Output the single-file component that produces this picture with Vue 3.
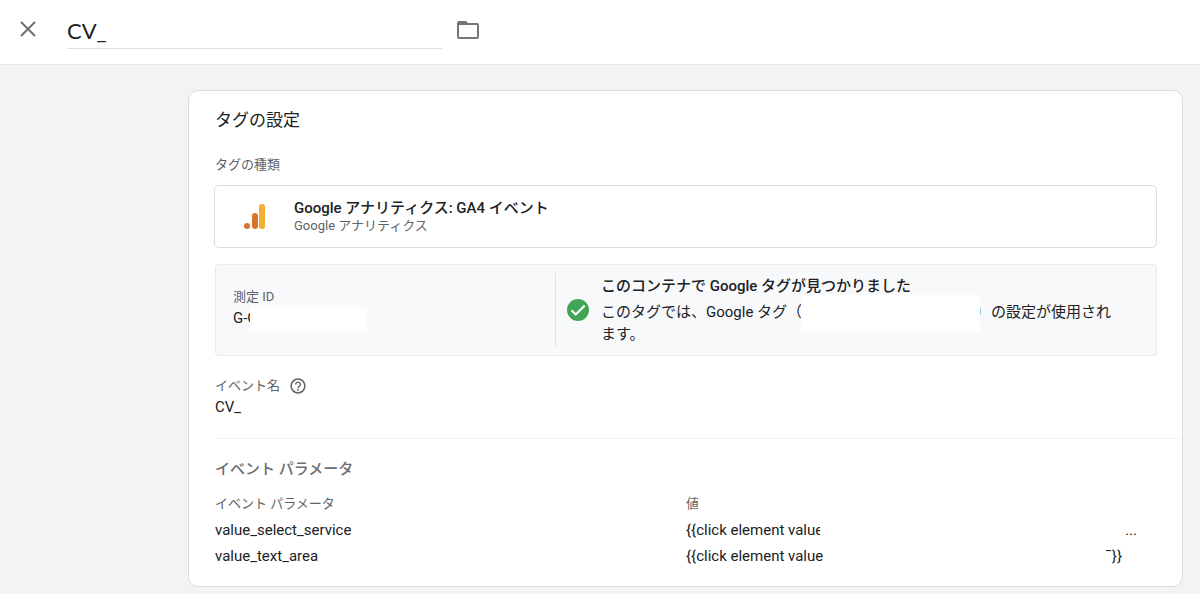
<script setup>
import { ref } from "vue"

const tagName = ref("CV_")
const eventName = ref("CV_")

const params = ref([
  { name: "value_select_service", value: "{{click element value", mark: "", end: "...", clipped: true },
  { name: "value_text_area", value: "{{click element value", mark: "ˉ", end: "}}", clipped: false }
])
</script>

<template>
  <div class="page">
    <header>
      <button class="icon-button close" aria-label="閉じる">
        <svg width="16" height="16" viewBox="0 0 16 16">
          <path d="M1 1l14 14M15 1L1 15" fill="none" stroke="#6b6e72" stroke-width="1.9" />
        </svg>
      </button>
      <input v-model="tagName" class="tag-name" type="text" aria-label="タグ名">
      <button class="icon-button folder" aria-label="フォルダ">
        <svg width="22" height="18" viewBox="0 0 22 18">
          <path d="M2 0h7l2 2h9a2 2 0 0 1 2 2v12a2 2 0 0 1-2 2H2a2 2 0 0 1-2-2V2a2 2 0 0 1 2-2zm0 4v12h18V4z" fill="#757575" fill-rule="evenodd" />
        </svg>
      </button>
    </header>

    <main class="card">
      <h1>タグの設定</h1>
      <p class="label">タグの種類</p>

      <div class="tag-type">
        <svg class="logo" width="22" height="26" viewBox="0 0 22 26">
          <rect x="15" y="0" width="6" height="25" rx="3" fill="#f2ae35" />
          <rect x="8" y="9" width="6" height="16" rx="3" fill="#d97529" />
          <circle cx="3" cy="22" r="3" fill="#d97529" />
        </svg>
        <div class="type-text">
          <p class="type-name">Google アナリティクス: GA4 イベント</p>
          <p class="label type-vendor">Google アナリティクス</p>
        </div>
      </div>

      <section class="measurement">
        <div class="measurement-id">
          <p class="label">測定 ID</p>
          <p class="id-value">G-C<span class="cover id-cover"></span></p>
        </div>
        <div class="found">
          <svg class="check" width="22" height="22" viewBox="0 0 22 22">
            <circle cx="11" cy="11" r="11" fill="#41a556" />
            <path d="M4.5 11.3l4.2 4.2 9-9" fill="none" stroke="#fff" stroke-width="2.2" />
          </svg>
          <div>
            <p class="found-title">このコンテナで Google タグが見つかりました</p>
            <p class="found-text">このタグでは、Google タグ（<span class="cover tag-cover"></span><span class="link-end">）</span>の設定が使用されます。</p>
          </div>
        </div>
      </section>

      <div class="event">
        <div class="event-label">
          <p class="label">イベント名</p>
          <button class="icon-button" aria-label="ヘルプ">
            <svg width="16" height="16" viewBox="0 0 16 16">
              <circle cx="8" cy="8" r="6.9" fill="none" stroke="#5f6368" stroke-width="1.5" />
              <path d="M5.7 6.5a2.3 2.3 0 1 1 3.8 1.7C8.6 8.9 8 9.2 8 10.2" fill="none" stroke="#5f6368" stroke-width="1.4" />
              <rect x="7.2" y="11" width="1.6" height="1.6" fill="#5f6368" />
            </svg>
          </button>
        </div>
        <p>{{ eventName }}</p>
      </div>

      <section class="params">
        <h2>イベント パラメータ</h2>
        <table>
          <thead>
            <tr>
              <th>イベント パラメータ</th>
              <th>値</th>
            </tr>
          </thead>
          <tbody>
            <tr v-for="param in params" :key="param.name">
              <td>{{ param.name }}</td>
              <td>
                <div class="value" :class="{ clipped: param.clipped }">
                  <span>{{ param.value }}</span>
                  <span class="cover value-cover"></span>
                  <span v-if="param.mark" class="mark">{{ param.mark }}</span>
                  <span>{{ param.end }}</span>
                </div>
              </td>
            </tr>
          </tbody>
        </table>
      </section>
    </main>
  </div>
</template>

<style>
body {
  background-color: #f1f3f4;
}
</style>

<style scoped>
.page {
  font-family: Roboto, "Noto Sans CJK JP", sans-serif;
  font-size: 15px;
  line-height: 22px;
  color: #202124;
}

p,
h1,
h2 {
  margin: 0;
}

header {
  display: flex;
  align-items: center;
  height: 64px;
  padding: 0 20px;
  background-color: white;
  border-bottom: 1px solid #e2e4e6;
}

.icon-button {
  display: flex;
  padding: 0;
  border: none;
  background: none;
  cursor: pointer;
}

.close {
  margin: 0 31px 6px 0;
}

.folder {
  margin: 0 0 4px 15px;
}

.tag-name {
  width: 375px;
  height: 36px;
  margin-bottom: 2px;
  padding: 0;
  box-sizing: border-box;
  border: none;
  border-bottom: 1px solid #e0e0e0;
  outline: none;
  background: none;
  font-family: Lato, sans-serif;
  font-size: 22px;
  color: #202124;
}

.card {
  margin: 25px 17px 7px 188px;
  padding: 16px 0 17px 25px;
  background-color: white;
  border: 1px solid #dadce0;
  border-radius: 10px;
}

h1,
h1 + .label {
  margin-left: 1px;
}

h1 {
  font-size: 17px;
  font-weight: 400;
  line-height: 26px;
}

.label {
  font-size: 13px;
  line-height: 20px;
  color: #5f6368;
}

h1 + .label {
  margin-top: 22px;
}

.tag-type {
  display: flex;
  align-items: center;
  gap: 28px;
  height: 61px;
  margin: 10px 25px 0 0;
  padding-left: 29px;
  border: 1px solid #dadce0;
  border-radius: 5px;
}

.type-text {
  padding-bottom: 2px;
}

.type-name {
  font-weight: 500;
  line-height: 20px;
}

.type-vendor {
  line-height: 16px;
}

.measurement {
  display: flex;
  margin: 16px 25px 0 1px;
  padding: 8px 0;
  background-color: #f8f9fa;
  border: 1px solid #e8eaed;
  border-radius: 4px;
}

.measurement-id {
  width: 322px;
  padding: 14px 0 0 17px;
  border-right: 1px solid #e0e2e5;
}

.cover {
  position: relative;
  display: inline-block;
  background-color: white;
}

.id-cover {
  width: 117px;
  height: 24px;
  margin: -4px 0 -4px -7px;
  vertical-align: middle;
}

.found {
  flex: 1;
  display: flex;
  align-items: center;
  gap: 12px;
  padding: 2px 30px 2px 11px;
}

.check {
  flex: none;
}

.found-title {
  margin-bottom: 4px;
  font-weight: 500;
}

.tag-cover {
  width: 179px;
  height: 36px;
  margin: -8px -4px -8px -1px;
  vertical-align: middle;
}

.link-end {
  color: #6f9fd8;
}

.event {
  padding: 20px 0 20px;
  margin-left: 1px;
  border-bottom: 1px solid #f1f3f4;
}

.event-label {
  display: flex;
  align-items: center;
  gap: 10px;
}

.params {
  margin-left: 1px;
}

h2 {
  margin-top: 19px;
  font-size: 15px;
  font-weight: 500;
  line-height: 22px;
  color: #6b6e72;
}

table {
  width: 100%;
  margin-top: 11px;
  border-collapse: collapse;
  table-layout: fixed;
}

th,
td {
  height: 26px;
  padding: 0;
  text-align: left;
}

th {
  font-size: 13px;
  font-weight: 400;
  color: #5f6368;
}

th:first-child {
  width: 471px;
}

.value {
  display: flex;
  padding-right: 60px;
}

.value.clipped {
  padding-right: 45px;
}

.value-cover {
  flex: 1;
}

.clipped .value-cover {
  margin-left: -3px;
}
</style>
